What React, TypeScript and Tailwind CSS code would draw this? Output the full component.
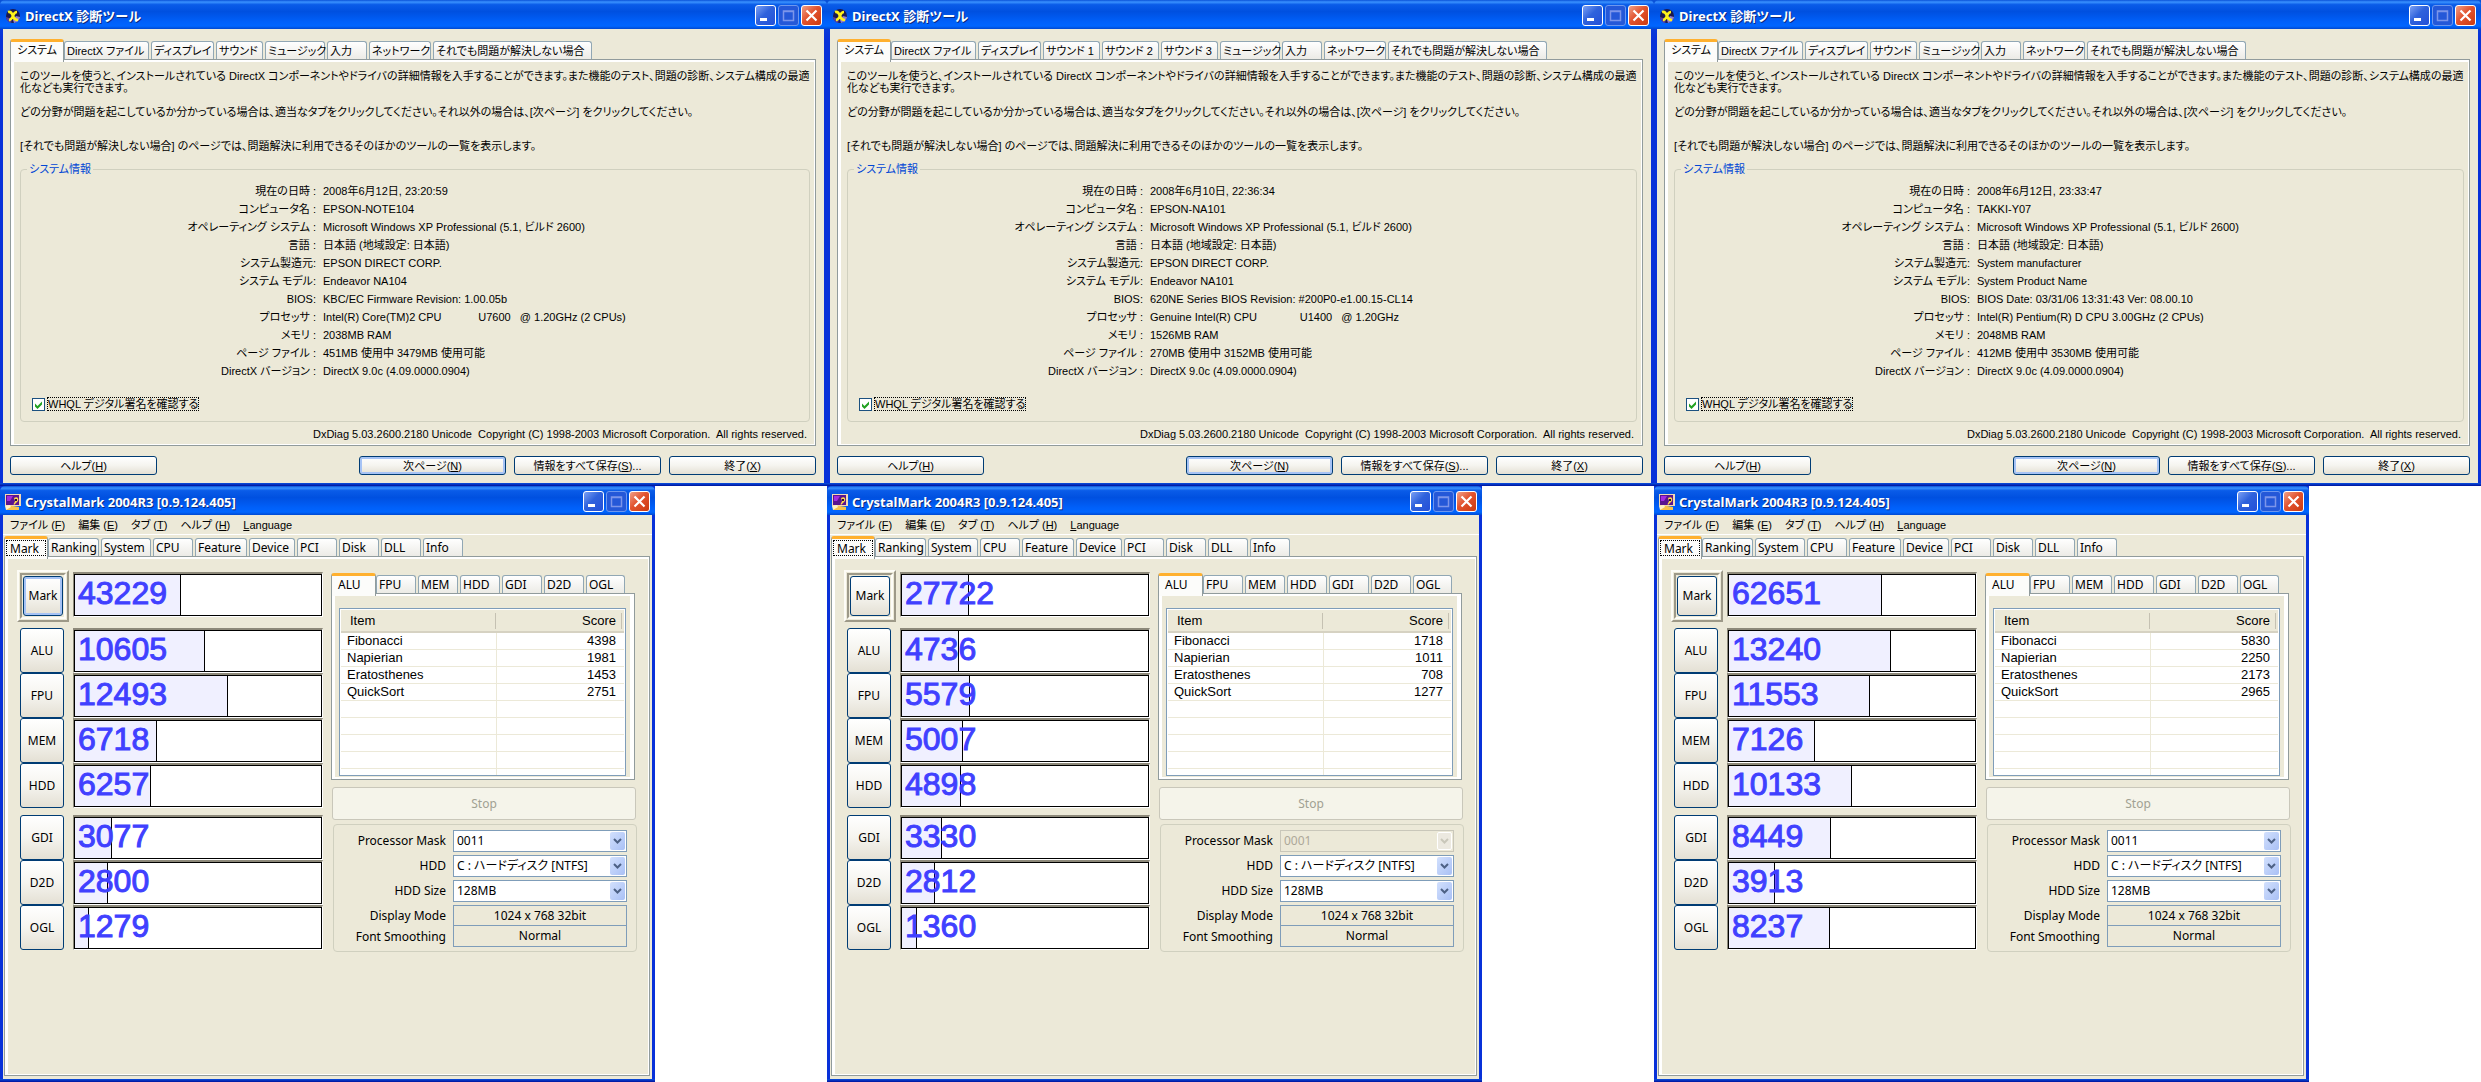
import { ReactNode } from "react";
import clsx from "clsx";

type TabItem = { label: string; width: string };

type Machine = {
  id: string;
  dxTabs: TabItem[];
  info: [string, string][];
  marks: { label: string; score: number; fill: number }[];
  focused: boolean;
  alu: [string, number][];
  mask: string;
  maskDisabled: boolean;
};

const infoLabels = [
  "現在の日時 :",
  "コンピュータ名 :",
  "オペレーティング システム :",
  "言語 :",
  "システム製造元:",
  "システム モデル:",
  "BIOS:",
  "プロセッサ :",
  "メモリ :",
  "ページ ファイル :",
  "DirectX バージョン :",
];

const markLabels = ["Mark", "ALU", "FPU", "MEM", "HDD", "GDI", "D2D", "OGL"];
const aluItems = ["Fibonacci", "Napierian", "Eratosthenes", "QuickSort"];

const info = (values: string[]) =>
  infoLabels.map((label, i): [string, string] => [label, values[i]]);

const marks = (scores: number[], fills: number[]) =>
  markLabels.map((label, i) => ({ label, score: scores[i], fill: fills[i] }));

const alu = (scores: number[]) =>
  aluItems.map((item, i): [string, number] => [item, scores[i]]);

const dxTabs = (sounds: TabItem[]): TabItem[] => [
  { label: "システム", width: "w-[54px]" },
  { label: "DirectX ファイル", width: "w-[85px]" },
  { label: "ディスプレイ", width: "w-[63px]" },
  ...sounds,
  { label: "ミュージック", width: "w-[60px]" },
  { label: "入力", width: "w-[40px]" },
  { label: "ネットワーク", width: "w-[62px]" },
  { label: "それでも問題が解決しない場合", width: "w-[159px]" },
];

const machines: Machine[] = [
  {
    id: "note104",
    dxTabs: dxTabs([{ label: "サウンド", width: "w-[47px]" }]),
    info: info([
      "2008年6月12日, 23:20:59",
      "EPSON-NOTE104",
      "Microsoft Windows XP Professional (5.1, ビルド 2600)",
      "日本語 (地域設定: 日本語)",
      "EPSON DIRECT CORP.",
      "Endeavor NA104",
      "KBC/EC Firmware Revision: 1.00.05b",
      "Intel(R) Core(TM)2 CPU            U7600   @ 1.20GHz (2 CPUs)",
      "2038MB RAM",
      "451MB 使用中 3479MB 使用可能",
      "DirectX 9.0c (4.09.0000.0904)",
    ]),
    marks: marks(
      [43229, 10605, 12493, 6718, 6257, 3077, 2800, 1279],
      [106, 130, 153, 82, 76, 37, 33, 14]
    ),
    focused: true,
    alu: alu([4398, 1981, 1453, 2751]),
    mask: "0011",
    maskDisabled: false,
  },
  {
    id: "na101",
    dxTabs: dxTabs([
      { label: "サウンド 1", width: "w-[57px]" },
      { label: "サウンド 2", width: "w-[57px]" },
      { label: "サウンド 3", width: "w-[57px]" },
    ]),
    info: info([
      "2008年6月10日, 22:36:34",
      "EPSON-NA101",
      "Microsoft Windows XP Professional (5.1, ビルド 2600)",
      "日本語 (地域設定: 日本語)",
      "EPSON DIRECT CORP.",
      "Endeavor NA101",
      "620NE Series BIOS Revision: #200P0-e1.00.15-CL14",
      "Genuine Intel(R) CPU              U1400   @ 1.20GHz",
      "1526MB RAM",
      "270MB 使用中 3152MB 使用可能",
      "DirectX 9.0c (4.09.0000.0904)",
    ]),
    marks: marks(
      [27722, 4736, 5579, 5007, 4898, 3330, 2812, 1360],
      [67, 57, 68, 61, 59, 40, 33, 15]
    ),
    focused: false,
    alu: alu([1718, 1011, 708, 1277]),
    mask: "0001",
    maskDisabled: true,
  },
  {
    id: "y07",
    dxTabs: dxTabs([{ label: "サウンド", width: "w-[47px]" }]),
    info: info([
      "2008年6月12日, 23:33:47",
      "TAKKI-Y07",
      "Microsoft Windows XP Professional (5.1, ビルド 2600)",
      "日本語 (地域設定: 日本語)",
      "System manufacturer",
      "System Product Name",
      "BIOS Date: 03/31/06 13:31:43 Ver: 08.00.10",
      "Intel(R) Pentium(R) D CPU 3.00GHz (2 CPUs)",
      "2048MB RAM",
      "412MB 使用中 3530MB 使用可能",
      "DirectX 9.0c (4.09.0000.0904)",
    ]),
    marks: marks(
      [62651, 13240, 11553, 7126, 10133, 8449, 3913, 8237],
      [153, 162, 141, 86, 123, 102, 46, 101]
    ),
    focused: false,
    alu: alu([5830, 2250, 2173, 2965]),
    mask: "0011",
    maskDisabled: false,
  },
];

const crystalTabs: TabItem[] = [
  { label: "Mark", width: "w-[44px]" },
  { label: "Ranking", width: "w-[51px]" },
  { label: "System", width: "w-[50px]" },
  { label: "CPU", width: "w-[40px]" },
  { label: "Feature", width: "w-[52px]" },
  { label: "Device", width: "w-[46px]" },
  { label: "PCI", width: "w-[40px]" },
  { label: "Disk", width: "w-[40px]" },
  { label: "DLL", width: "w-[40px]" },
  { label: "Info", width: "w-[40px]" },
];

const scoreTabs: TabItem[] = [
  { label: "ALU", width: "w-[45px]" },
  { label: "FPU", width: "w-[40px]" },
  { label: "MEM", width: "w-[40px]" },
  { label: "HDD", width: "w-[40px]" },
  { label: "GDI", width: "w-[40px]" },
  { label: "D2D", width: "w-[40px]" },
  { label: "OGL", width: "w-[39px]" },
];

function DirectXIcon() {
  return (
    <svg viewBox="0 0 16 16" className="size-4">
      <circle cx="8" cy="8" r="7" fill="#1c1a4e" />
      <path d="M9 15a7 7 0 0 0 6-6l-4-1-3 4z" fill="#8f7fd0" />
      <path d="M1 9a7 7 0 0 0 5 6l1-4z" fill="#5a3f9c" />
      <path
        d="M3 4c3-1 4 1 5 4s3 4 5 4M12 4c-3 0-3 2-4 4s-2 4-4 4"
        fill="none"
        stroke="#fff21a"
        strokeWidth="2.600"
      />
    </svg>
  );
}

function CrystalIcon() {
  return (
    <svg viewBox="0 0 16 16" className="size-4">
      <path d="M0 0h16v12H0z" fill="#f3d9b4" />
      <path d="M1 1h13v10H1z" fill="#5a1490" />
      <path d="M2 2h6l-3 5H2z" fill="#a22be0" />
      <path d="M9 4c3-2 5 0 4 3l-4 4c-1-1 1-3 1-4z" fill="#ffd84a" />
      <path d="M10 5h2v2h-2z" fill="#2b0d3f" />
      <path d="M1 16c1-4 5-5 7-4l6 1v3z" fill="#f7c24c" />
      <path d="M0 12l5-1 1 2-5 3z" fill="#fff2c8" />
    </svg>
  );
}

function TitleBar({ icon, title }: { icon: ReactNode; title: string }) {
  const base =
    "flex size-[21px] items-center justify-center rounded-[3px] border";
  return (
    <header className="flex h-[29px] items-center rounded-t-[5px] bg-[linear-gradient(#0a52d8_0%,#3a92ff_7%,#0a5ce8_16%,#0050e0_40%,#0060fa_75%,#0066ff_90%,#0048d0_100%)] pt-[2px] pr-[5px] pl-[5px]">
      {icon}
      <h1 className="ml-[4px] grow font-['Noto_Sans','Noto_Sans_CJK_JP',sans-serif] text-[13px] leading-[16px] font-bold text-white [text-shadow:1px_1px_0_#0a2a80]">
        {title}
      </h1>
      <div className="flex gap-[2px]">
        <button
          aria-label="最小化"
          className={clsx(
            base,
            "border-white bg-[linear-gradient(135deg,#7ba0f4,#2f62dc_45%,#2450d8)]"
          )}
        >
          <svg viewBox="0 0 19 19" className="size-[19px]">
            <path d="M4 12h7v3H4z" fill="#fff" />
          </svg>
        </button>
        <button
          aria-label="最大化"
          disabled
          className={clsx(base, "border-[#6d97ee] bg-[#2558d8]")}
        >
          <svg viewBox="0 0 19 19" className="size-[19px]">
            <path
              d="M4.500 5h10v9.500h-10zM4 5.500h11"
              fill="none"
              stroke="#7c95ea"
              strokeWidth="1.500"
            />
          </svg>
        </button>
        <button
          aria-label="閉じる"
          className={clsx(
            base,
            "border-white bg-[linear-gradient(135deg,#f0a088,#e2532f_45%,#cc3a10)]"
          )}
        >
          <svg viewBox="0 0 19 19" className="size-[19px]">
            <path
              d="M4.500 4.500l10 10M14.500 4.500l-10 10"
              stroke="#fff"
              strokeWidth="2.200"
            />
          </svg>
        </button>
      </div>
    </header>
  );
}

function Tabs({
  items,
  dotted,
  className,
}: {
  items: TabItem[];
  dotted?: boolean;
  className?: string;
}) {
  return (
    <div
      role="tablist"
      className={clsx("flex items-end gap-[2px] whitespace-nowrap", className)}
    >
      {items.map(({ label, width }, i) =>
        i === 0 ? (
          <button
            key={label}
            role="tab"
            aria-selected="true"
            className={clsx(
              width,
              "relative z-10 -mr-[2px] -mb-[3px] h-[23px] shrink-0 rounded-t-[3px] border-x border-t-[3px] border-x-[#919b9c] border-t-[#ffb02e] bg-[#fcfcfa] px-[1px] pb-[3px]"
            )}
          >
            <span
              className={clsx(
                "block h-[16px] text-left leading-[15px]",
                dotted
                  ? "border border-dotted border-black px-[3px] leading-[14px]"
                  : "px-[5px]"
              )}
            >
              {label}
            </span>
          </button>
        ) : (
          <button
            key={label}
            role="tab"
            aria-selected="false"
            className={clsx(
              width,
              "h-[18px] shrink-0 rounded-t-[3px] border border-b-0 border-[#91a7b4] bg-linear-to-b from-white to-[#ecebe6] pl-[2px] text-left leading-[18px]"
            )}
          >
            {label}
          </button>
        )
      )}
    </div>
  );
}

function XpButton({
  children,
  primary,
  className,
}: {
  children: ReactNode;
  primary?: boolean;
  className?: string;
}) {
  return (
    <button
      className={clsx(
        "rounded-[3px] border border-[#003c74] bg-linear-to-b from-white via-[#f5f4ef] to-[#e4e0d4] text-center",
        primary && "shadow-[inset_0_0_0_2px_#a6c3f5]",
        className
      )}
    >
      {children}
    </button>
  );
}

function DirectXWindow({ machine }: { machine: Machine }) {
  return (
    <section className="bg-[linear-gradient(#0a52d8,#0831d9_40px)] font-['Liberation_Sans','Noto_Sans_CJK_JP',sans-serif] text-[11px]">
      <TitleBar icon={<DirectXIcon />} title="DirectX 診断ツール" />
      <div className="mx-[3px] bg-[#ece9d8] pt-[10px] pr-[8px] pb-[8px] pl-[7px] [font-feature-settings:'palt']">
        <Tabs items={machine.dxTabs} />
        <div className="border border-[#919b9c] pt-[10px] pr-[5px] pb-[4px] pl-[9px] leading-[12px] shadow-[inset_3px_2px_0_#fff,inset_-1px_-1px_0_#fff]">
          <p>
            このツールを使うと、インストールされている DirectX
            コンポーネントやドライバの詳細情報を入手することができます。また機能のテスト、問題の診断、システム構成の最適
            <br />
            化なども実行できます。
          </p>
          <p className="mt-[12px]">
            どの分野が問題を起こしているか分かっている場合は、適当なタブをクリックしてください。それ以外の場合は、[次ページ]
            をクリックしてください。
          </p>
          <p className="mt-[22px]">
            [それでも問題が解決しない場合]
            のページでは、問題解決に利用できるそのほかのツールの一覧を表示します。
          </p>
          <fieldset className="mt-[10px] rounded-[4px] border border-[#d0d0bf] pb-[10px]">
            <legend className="ml-[6px] px-[2px] leading-[14px] text-[#0046d5]">
              システム情報
            </legend>
            <dl className="grid grid-cols-[295px_1fr] gap-x-[7px] pt-[6px] leading-[18px] whitespace-pre">
              {machine.info.map(([label, value]) => (
                <div key={label} className="contents">
                  <dt className="text-right">{label}</dt>
                  <dd>{value}</dd>
                </div>
              ))}
            </dl>
            <div className="mt-[17px] flex items-center gap-[2px] pl-[11px]">
              <span className="relative flex size-[13px]">
                <input
                  id={`whql-${machine.id}`}
                  type="checkbox"
                  defaultChecked
                  className="peer size-[13px] appearance-none border border-[#1c5180] bg-white"
                />
                <svg
                  viewBox="0 0 13 13"
                  className="pointer-events-none absolute inset-0 hidden size-[13px] peer-checked:block"
                >
                  <path
                    d="M3 5.500l2.500 2.500L10 3.500v3L5.500 11 3 8.500z"
                    fill="#21a121"
                  />
                </svg>
              </span>
              <label
                htmlFor={`whql-${machine.id}`}
                className="border border-dotted border-black leading-[12px]"
              >
                WHQL デジタル署名を確認する
              </label>
            </div>
          </fieldset>
          <p className="mt-[5px] pr-[3px] text-right leading-[14px] whitespace-pre">
            {
              "DxDiag 5.03.2600.2180 Unicode  Copyright (C) 1998-2003 Microsoft Corporation.  All rights reserved."
            }
          </p>
        </div>
        <div className="mt-[10px] flex gap-[8px] leading-[16px]">
          <XpButton className="mr-auto h-[19px] w-[147px]">
            ヘルプ(<u>H</u>)
          </XpButton>
          <XpButton primary className="h-[19px] w-[147px]">
            次ページ(<u>N</u>)
          </XpButton>
          <XpButton className="h-[19px] w-[147px]">
            情報をすべて保存(<u>S</u>)...
          </XpButton>
          <XpButton className="h-[19px] w-[147px]">
            終了(<u>X</u>)
          </XpButton>
        </div>
      </div>
      <div className="h-[3px] bg-[linear-gradient(#0a50e0,#00139c)]" />
    </section>
  );
}

function ScoreBar({ score, fill }: { score: number; fill: number }) {
  return (
    <div className="h-[45px] w-[250px] border-t-2 border-r border-b border-l border-t-[#8d897a] border-r-white border-b-white border-l-[#8d897a]">
      <div className="relative h-full border border-black bg-white">
        <div
          className="h-full border-r border-black bg-[#f0f0ff]"
          style={{ width: fill }}
        />
        <output className="absolute top-0 left-[3px] font-['Liberation_Sans',sans-serif] text-[32px] leading-[36px] text-[#4040ff] [-webkit-text-stroke:1px_#4040ff]">
          {score}
        </output>
      </div>
    </div>
  );
}

function Combo({
  id,
  label,
  value,
  disabled,
}: {
  id: string;
  label: string;
  value: string;
  disabled?: boolean;
}) {
  return (
    <>
      <label htmlFor={id} className="text-right leading-[22px]">
        {label}
      </label>
      <div className="relative mb-[3px] flex">
        <select
          id={id}
          disabled={disabled}
          className={clsx(
            "h-[22px] w-full appearance-none border pl-[3px]",
            disabled
              ? "border-[#c9c7ba] bg-[#ece9d8] text-[#aca899]"
              : "border-[#7f9db9] bg-white"
          )}
        >
          <option>{value}</option>
        </select>
        <span
          className={clsx(
            "pointer-events-none absolute top-[2px] right-[2px] flex h-[18px] w-[15px] items-center justify-center rounded-[2px]",
            disabled
              ? "border border-white bg-[#ece9e0] text-[#c9c7ba]"
              : "bg-linear-to-br from-[#d2e0fd] to-[#a9c0f5] text-[#4d6185]"
          )}
        >
          <svg viewBox="0 0 9 6" className="h-[6px] w-[9px]">
            <path
              d="M1 1l3.500 3.500L8 1"
              fill="none"
              stroke="currentColor"
              strokeWidth="2"
            />
          </svg>
        </span>
      </div>
    </>
  );
}

function ScoreTable({ rows }: { rows: [string, number][] }) {
  const blanks = [0, 1, 2, 3, 4];
  return (
    <div className="mt-[14px] mr-[8px] mb-[3px] ml-[7px] h-[168px] overflow-hidden border border-[#7f9db9] bg-white p-px">
      <table className="w-full table-fixed border-collapse font-['Liberation_Sans',sans-serif] text-[13px] leading-[16px]">
        <thead>
          <tr className="h-[22px] border-b-2 border-[#d6d2c2] bg-[#ece9d8]">
            <th className="w-[155px] pl-[9px] text-left font-normal">
              <span className="block border-r border-[#c5c1b2]">Item</span>
            </th>
            <th className="pr-[2px] text-right font-normal">
              <span className="block border-r border-[#c5c1b2] pr-[5px]">
                Score
              </span>
            </th>
          </tr>
        </thead>
        <tbody>
          {rows.map(([item, score]) => (
            <tr key={item} className="h-[17px] border-b border-[#ece9d8]">
              <td className="border-r border-[#ece9d8] pl-[6px]">{item}</td>
              <td className="pr-[8px] text-right">{score}</td>
            </tr>
          ))}
          {blanks.map((n) => (
            <tr key={n} className="h-[17px] border-b border-[#ece9d8]">
              <td className="border-r border-[#ece9d8]" />
              <td />
            </tr>
          ))}
        </tbody>
      </table>
    </div>
  );
}

function CrystalMarkWindow({ machine }: { machine: Machine }) {
  const [total, ...rest] = machine.marks;
  return (
    <section className="flex w-[79.2%] grow flex-col bg-[#0831d9] font-['Noto_Sans','Noto_Sans_CJK_JP',sans-serif] text-[12px] [font-feature-settings:'palt']">
      <TitleBar icon={<CrystalIcon />} title="CrystalMark 2004R3 [0.9.124.405]" />
      <div className="mx-[3px] flex grow flex-col bg-[#ece9d8] pr-[2px] pb-[3px] pl-[1px]">
        <nav className="-mr-[2px] -ml-px flex h-[20px] gap-[13px] border-b border-white pl-[7px] font-['Liberation_Sans','Noto_Sans_CJK_JP',sans-serif] text-[11px] leading-[20px] whitespace-nowrap">
          <button>
            ファイル (<u>F</u>)
          </button>
          <button>
            編集 (<u>E</u>)
          </button>
          <button>
            タブ (<u>T</u>)
          </button>
          <button>
            ヘルプ (<u>H</u>)
          </button>
          <button>
            <u>L</u>anguage
          </button>
        </nav>
        <Tabs items={crystalTabs} dotted className="h-[21px]" />
        <main className="flex grow items-start border border-[#919b9c] pt-[13px] pr-[12px] pl-[12px] shadow-[inset_3px_2px_0_#fff,inset_-1px_-1px_0_#fff]">
          <div className="shrink-0">
            <div className="mb-[6px] flex gap-[4px]">
              <div className="size-[52px] border-2 border-[#fdfcf6] border-r-[#9d9988] border-b-[#9d9988] p-px">
                <div className="size-full border-2 border-[#9d9988] border-r-[#fdfcf6] border-b-[#fdfcf6] p-px">
                  <XpButton primary={machine.focused} className="size-full">
                    {total.label}
                  </XpButton>
                </div>
              </div>
              <div className="pt-[2px]">
                <ScoreBar score={total.score} fill={total.fill} />
              </div>
            </div>
            {rest.map((mark) => (
              <div
                key={mark.label}
                className={clsx(
                  "flex gap-[9px] pl-[3px]",
                  mark.label === "GDI" && "mt-[7px]"
                )}
              >
                <XpButton className="h-[45px] w-[44px]">{mark.label}</XpButton>
                <ScoreBar score={mark.score} fill={mark.fill} />
              </div>
            ))}
          </div>
          <div className="mt-[2px] ml-[8px] min-w-0 grow">
            <Tabs items={scoreTabs} className="h-[21px]" />
            <div className="mr-[2px] border border-[#919b9c] shadow-[inset_3px_2px_0_#fff,inset_-4px_-2px_0_#fff]">
              <ScoreTable rows={machine.alu} />
            </div>
            <button
              disabled
              className="mx-px mt-[7px] block h-[33px] w-[calc(100%-2px)] rounded-[3px] border border-[#c9c7ba] bg-[#f5f4ea] text-[#a1a192]"
            >
              Stop
            </button>
            <div className="mt-[4px] ml-[2px] grid grid-cols-[112px_1fr] gap-x-[7px] rounded-[4px] border border-[#d0d0bf] pt-[5px] pr-[9px] pb-[4px]">
              <Combo
                id={`mask-${machine.id}`}
                label="Processor Mask"
                value={machine.mask}
                disabled={machine.maskDisabled}
              />
              <Combo
                id={`hdd-${machine.id}`}
                label="HDD"
                value="C : ハードディスク [NTFS]"
              />
              <Combo
                id={`size-${machine.id}`}
                label="HDD Size"
                value="128MB"
              />
              <span className="text-right leading-[21px]">Display Mode</span>
              <output className="border border-[#7f9db9] text-center leading-[19px]">
                1024 x 768 32bit
              </output>
              <span className="text-right leading-[21px]">Font Smoothing</span>
              <output className="border border-t-0 border-[#7f9db9] text-center leading-[19px]">
                Normal
              </output>
            </div>
          </div>
        </main>
      </div>
      <div className="h-[3px] bg-[linear-gradient(#0a50e0,#00139c)]" />
    </section>
  );
}

export default function App() {
  return (
    <div className="grid min-h-screen grid-cols-3 bg-white text-black">
      {machines.map((machine) => (
        <div key={machine.id} className="flex flex-col">
          <DirectXWindow machine={machine} />
          <CrystalMarkWindow machine={machine} />
        </div>
      ))}
    </div>
  );
}
